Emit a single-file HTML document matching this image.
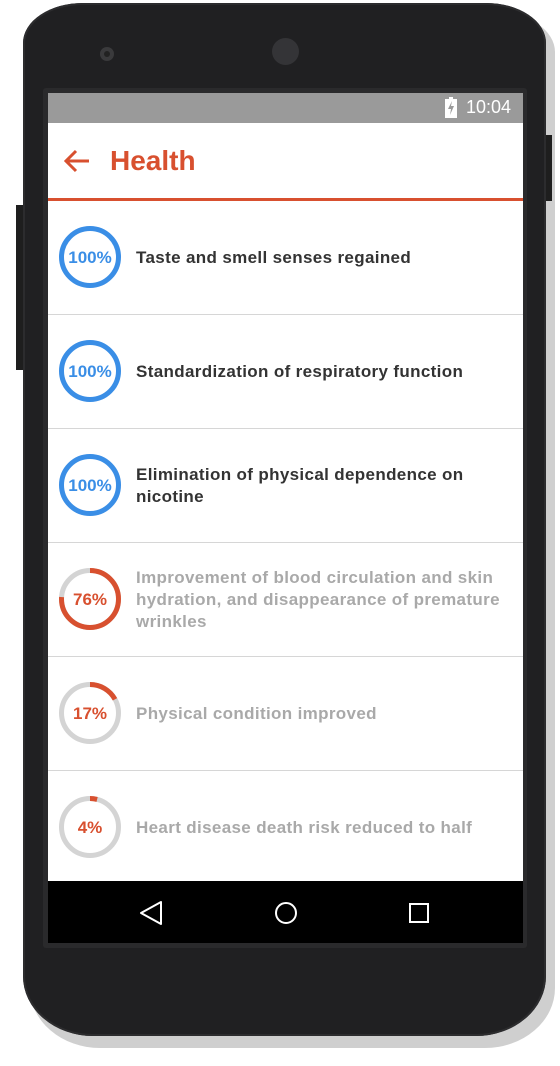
<!DOCTYPE html>
<html><head><style>
html,body{margin:0;padding:0;background:#fff;width:560px;height:1066px;overflow:hidden;font-family:"Liberation Sans",sans-serif}
.abs{position:absolute}
.row{position:absolute;left:48px;width:475px;height:113px;border-bottom:1px solid #d6d6d6;background:#fff}
.row svg{position:absolute;left:10px;top:24px}
.row .t{position:absolute;left:88px;top:0;height:113px;width:380px;display:flex;align-items:center;font-size:17px;font-weight:bold;line-height:22px;letter-spacing:0.35px}
.dark{color:#333}.light{color:#a9a9a9}
</style></head><body>
<div class="abs" style="left:30px;top:12px;width:525px;height:1036px;background:#cfcfcf;border-radius:60px 60px 70px 70px/40px 40px 60px 60px"></div>
<div class="abs" style="left:16px;top:205px;width:8px;height:165px;background:#1e1e1e"></div>
<div class="abs" style="left:544px;top:135px;width:8px;height:66px;background:#1e1e1e"></div>
<div class="abs" style="left:23px;top:3px;width:523px;height:1033px;background:#202022;border-radius:60px 60px 70px 70px/40px 40px 60px 60px;box-shadow:inset 0 0 0 2px #2c2c2e"></div>
<div class="abs" style="left:100px;top:47px;width:14px;height:14px;border-radius:50%;background:#3a3a3c"></div>
<div class="abs" style="left:104px;top:51px;width:6px;height:6px;border-radius:50%;background:#222"></div>
<div class="abs" style="left:272px;top:38px;width:27px;height:27px;border-radius:50%;background:#343437"></div>
<div class="abs" style="left:43px;top:88px;width:484px;height:860px;background:#2a2a2c;border-radius:3px"></div>
<div class="abs" style="left:48px;top:93px;width:475px;height:30px;background:#9a9a9a"></div>
<svg class="abs" style="left:445px;top:97px" width="12" height="21" viewBox="0 0 12 21"><rect x="4" y="0" width="4" height="2" fill="#fff"/><rect x="0" y="2" width="12" height="19" fill="#fff"/><path d="M7 4 L3 12 L6 12 L5 18 L9 9 L6 9 Z" fill="#9a9a9a"/></svg>
<div class="abs" style="left:466px;top:97px;font-size:18px;color:#fff">10:04</div>
<div class="abs" style="left:48px;top:123px;width:475px;height:75px;background:#fff"></div>
<svg class="abs" style="left:62px;top:148px" width="30" height="28" viewBox="0 0 30 28"><path d="M4 13 H27 M14 3 L4 13 L14 23" stroke="#d8502f" stroke-width="3" fill="none"/></svg>
<div class="abs" style="left:110px;top:145px;font-size:28px;font-weight:bold;color:#d8502f">Health</div>
<div class="abs" style="left:48px;top:198px;width:475px;height:3px;background:#d8502f"></div>

<div class="row" style="top:201px"><svg width="64" height="64"><circle cx="32" cy="32" r="28.5" fill="none" stroke="#3a8ee6" stroke-width="5"/><text x="32" y="38" text-anchor="middle" font-size="17" font-weight="bold" fill="#3a8ee6" font-family="Liberation Sans">100%</text></svg><div class="t dark">Taste and smell senses regained</div></div>
<div class="row" style="top:315px"><svg width="64" height="64"><circle cx="32" cy="32" r="28.5" fill="none" stroke="#3a8ee6" stroke-width="5"/><text x="32" y="38" text-anchor="middle" font-size="17" font-weight="bold" fill="#3a8ee6" font-family="Liberation Sans">100%</text></svg><div class="t dark">Standardization of respiratory function</div></div>
<div class="row" style="top:429px"><svg width="64" height="64"><circle cx="32" cy="32" r="28.5" fill="none" stroke="#3a8ee6" stroke-width="5"/><text x="32" y="38" text-anchor="middle" font-size="17" font-weight="bold" fill="#3a8ee6" font-family="Liberation Sans">100%</text></svg><div class="t dark">Elimination of physical dependence on nicotine</div></div>
<div class="row" style="top:543px"><svg width="64" height="64"><circle cx="32" cy="32" r="28.5" fill="none" stroke="#d4d4d4" stroke-width="5"/><circle cx="32" cy="32" r="28.5" fill="none" stroke="#d8502f" stroke-width="5" stroke-dasharray="136.1 200" transform="rotate(-90 32 32)"/><text x="32" y="38" text-anchor="middle" font-size="17" font-weight="bold" fill="#d8502f" font-family="Liberation Sans">76%</text></svg><div class="t light">Improvement of blood circulation and skin hydration, and disappearance of premature wrinkles</div></div>
<div class="row" style="top:657px"><svg width="64" height="64"><circle cx="32" cy="32" r="28.5" fill="none" stroke="#d4d4d4" stroke-width="5"/><circle cx="32" cy="32" r="28.5" fill="none" stroke="#d8502f" stroke-width="5" stroke-dasharray="30.4 200" transform="rotate(-90 32 32)"/><text x="32" y="38" text-anchor="middle" font-size="17" font-weight="bold" fill="#d8502f" font-family="Liberation Sans">17%</text></svg><div class="t light">Physical condition improved</div></div>
<div class="row" style="top:771px;height:110px;border:none"><svg width="64" height="64"><circle cx="32" cy="32" r="28.5" fill="none" stroke="#d4d4d4" stroke-width="5"/><circle cx="32" cy="32" r="28.5" fill="none" stroke="#d8502f" stroke-width="5" stroke-dasharray="7.2 200" transform="rotate(-90 32 32)"/><text x="32" y="38" text-anchor="middle" font-size="17" font-weight="bold" fill="#d8502f" font-family="Liberation Sans">4%</text></svg><div class="t light" style="height:113px">Heart disease death risk reduced to half</div></div>

<div class="abs" style="left:48px;top:881px;width:475px;height:62px;background:#000"></div>
<svg class="abs" style="left:48px;top:881px" width="475" height="62"><path d="M93 32 L113 21 V43 Z" fill="none" stroke="#fff" stroke-width="2" stroke-linejoin="round"/><circle cx="238" cy="32" r="10" fill="none" stroke="#fff" stroke-width="2"/><rect x="362" y="23" width="18" height="18" fill="none" stroke="#fff" stroke-width="2"/></svg>
</body></html>
